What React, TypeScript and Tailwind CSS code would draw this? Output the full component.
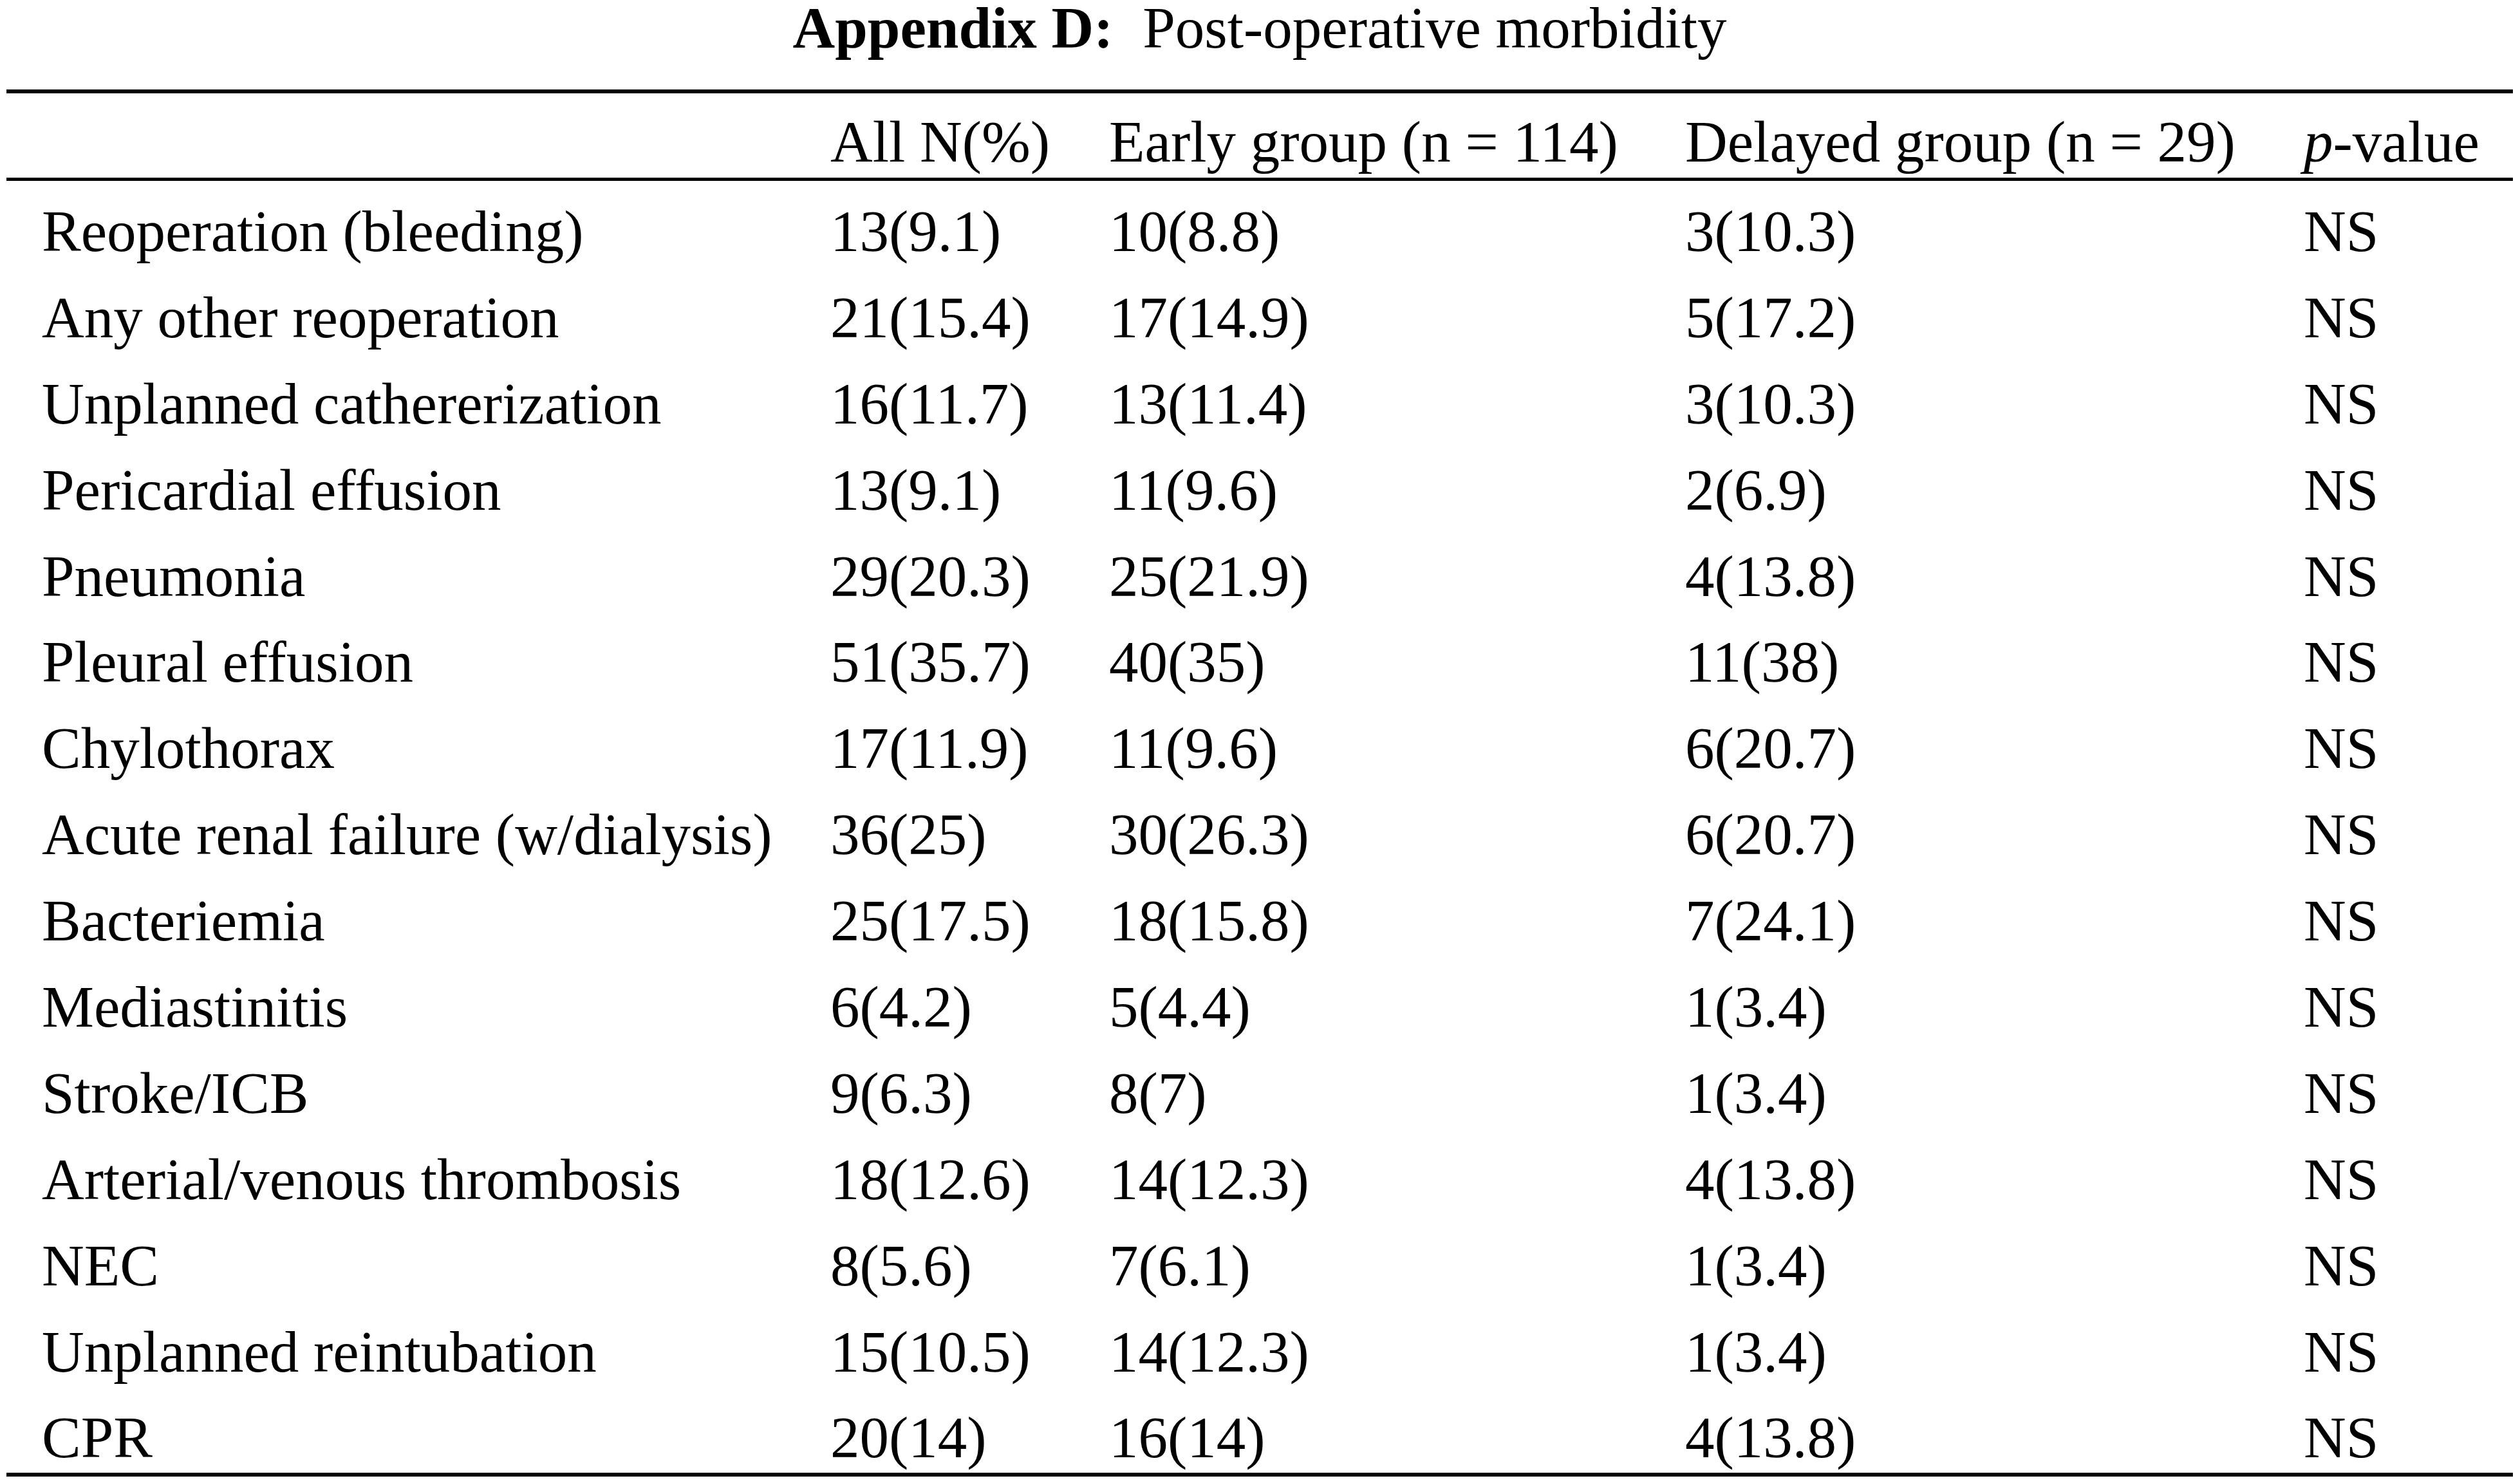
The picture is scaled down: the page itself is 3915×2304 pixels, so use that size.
import React from "react";

const rows: [string, string, string, string, string][] = [
  ["Reoperation (bleeding)", "13(9.1)", "10(8.8)", "3(10.3)", "NS"],
  ["Any other reoperation", "21(15.4)", "17(14.9)", "5(17.2)", "NS"],
  ["Unplanned cathererization", "16(11.7)", "13(11.4)", "3(10.3)", "NS"],
  ["Pericardial effusion", "13(9.1)", "11(9.6)", "2(6.9)", "NS"],
  ["Pneumonia", "29(20.3)", "25(21.9)", "4(13.8)", "NS"],
  ["Pleural effusion", "51(35.7)", "40(35)", "11(38)", "NS"],
  ["Chylothorax", "17(11.9)", "11(9.6)", "6(20.7)", "NS"],
  ["Acute renal failure (w/dialysis)", "36(25)", "30(26.3)", "6(20.7)", "NS"],
  ["Bacteriemia", "25(17.5)", "18(15.8)", "7(24.1)", "NS"],
  ["Mediastinitis", "6(4.2)", "5(4.4)", "1(3.4)", "NS"],
  ["Stroke/ICB", "9(6.3)", "8(7)", "1(3.4)", "NS"],
  ["Arterial/venous thrombosis", "18(12.6)", "14(12.3)", "4(13.8)", "NS"],
  ["NEC", "8(5.6)", "7(6.1)", "1(3.4)", "NS"],
  ["Unplanned reintubation", "15(10.5)", "14(12.3)", "1(3.4)", "NS"],
  ["CPR", "20(14)", "16(14)", "4(13.8)", "NS"],
];

const cols = "grid grid-cols-[1225px_433px_895px_961px_1fr] pl-[55px]";

export default function App() {
  return (
    <div className="w-[3915px] h-[2304px] bg-white text-black font-['Liberation_Serif','Times_New_Roman',serif] text-[91px]">
      <div className="ml-[10px] w-[3894px] flex flex-col">
        <div className="h-[88.6px] leading-[88.6px] text-center whitespace-pre mb-[50.4px]">
          <span className="font-bold">Appendix D:</span>
          {"  Post-operative morbidity"}
        </div>
        <div className="h-[6px] bg-black" />
        <div className={`${cols} h-[131px] pt-[21px] leading-[110px] whitespace-nowrap`}>
          <div />
          <div>All N(%)</div>
          <div>Early group (n = 114)</div>
          <div>Delayed group (n = 29)</div>
          <div>
            <span className="italic">p</span>-value
          </div>
        </div>
        <div className="h-[5px] bg-black" />
        <div className="flex flex-col pt-[12px]">
          {rows.map((r, i) => (
            <div
              key={i}
              className={`${cols} leading-[133.9px] whitespace-nowrap ${
                i === rows.length - 1 ? "h-[120.3px]" : "h-[133.9px]"
              }`}
            >
              {r.map((c, j) => (
                <div key={j}>{c}</div>
              ))}
            </div>
          ))}
        </div>
        <div className="h-[6px] bg-black" />
      </div>
    </div>
  );
}
